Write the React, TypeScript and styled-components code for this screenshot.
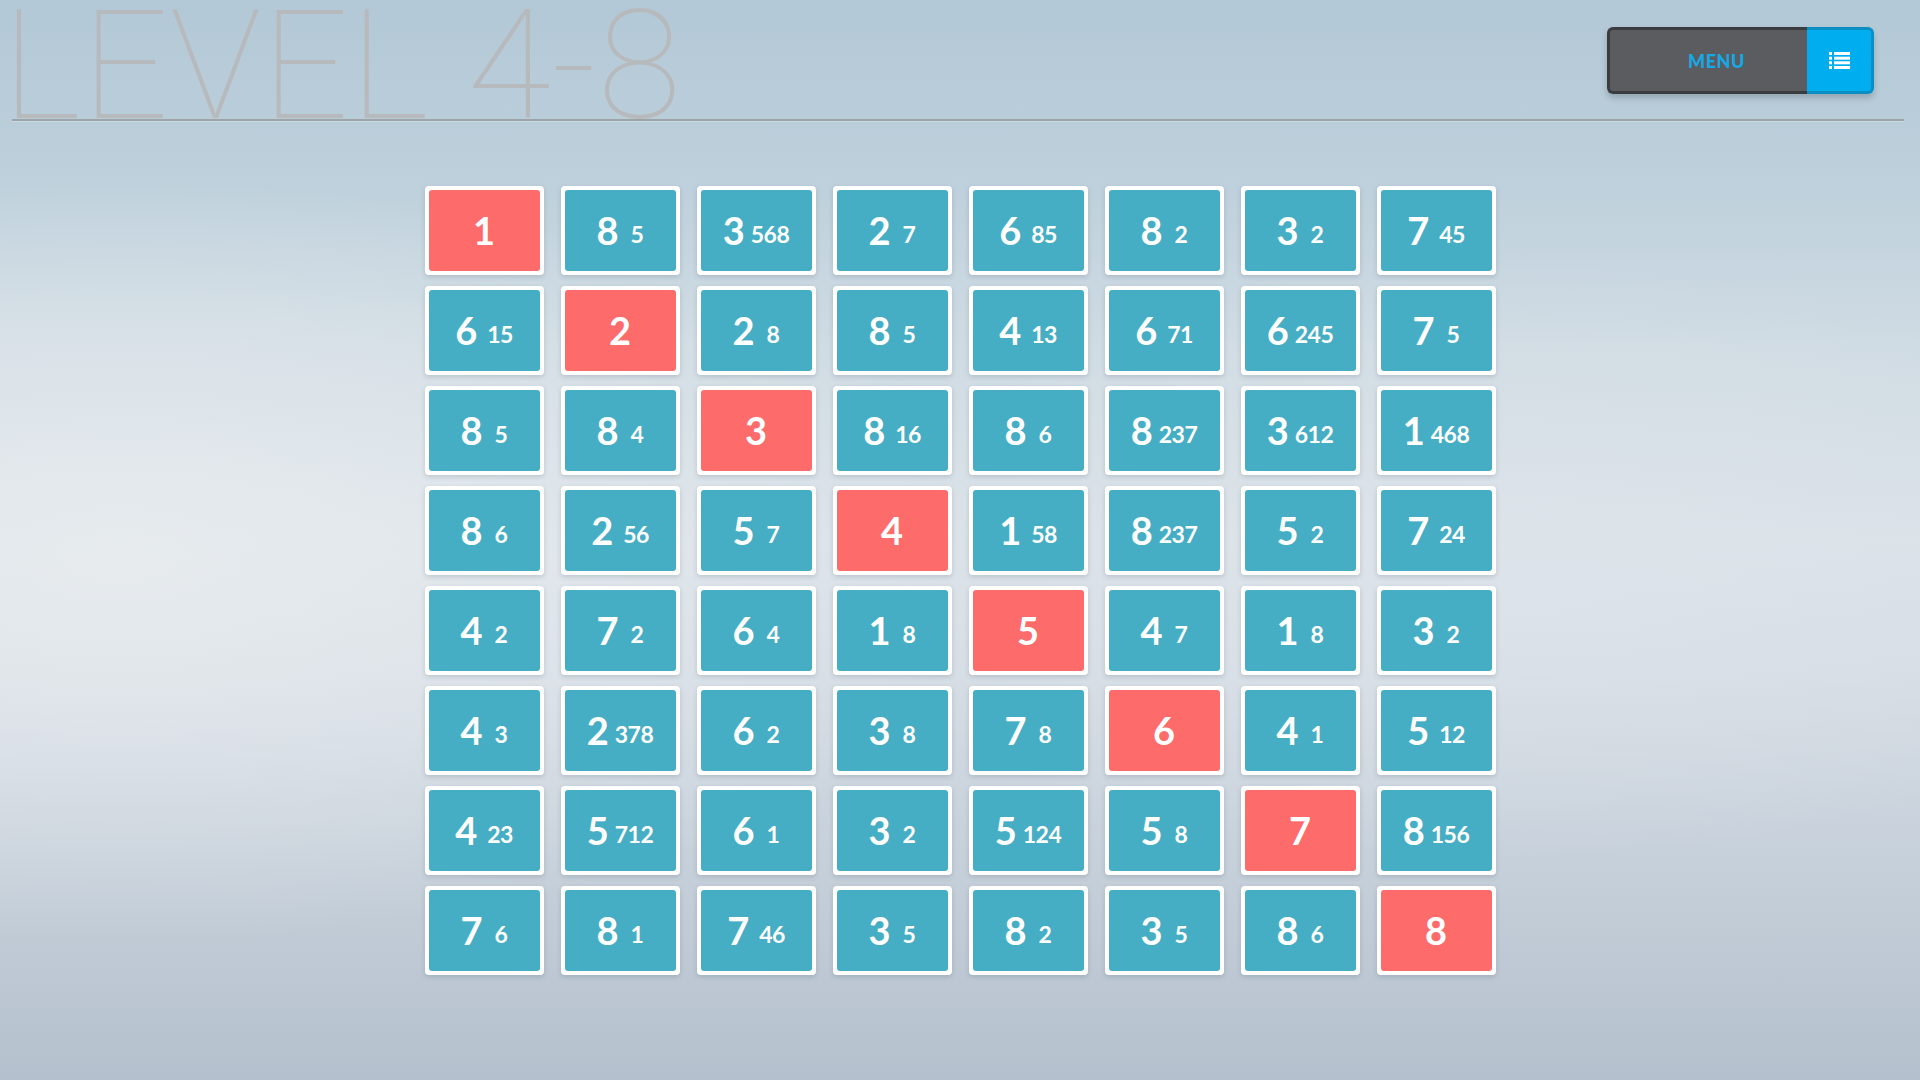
import styled, { createGlobalStyle } from "styled-components";

const Global = createGlobalStyle`
  html, body {
    margin: 0;
    padding: 0;
    height: 100%;
  }
  body {
    font-family: Lato, "Noto Sans", sans-serif;
    overflow: hidden;
  }
`

const Page = styled.div`
  width: 1920px;
  height: 1080px;
  background:
    radial-gradient(ellipse 900px 380px at 120px 560px, rgba(232,236,239,0.9), rgba(232,236,239,0) 100%),
    radial-gradient(ellipse 700px 300px at 1500px 560px, rgba(222,228,234,0.7), rgba(222,228,234,0) 100%),
    linear-gradient(180deg, #b3c8d6 0%, #bccfdb 15%, #cfdbe3 32%, #dae2e8 50%, #d6dde5 62%, #c6d0da 80%, #b4c0cd 100%);
  display: flex;
  flex-direction: column;
`

const Header = styled.header`
  margin: 0 16px 0 12px;
  height: 119px;
  border-bottom: 2px solid #9ea3a7;
  display: flex;
  justify-content: space-between;
  align-items: flex-start;
  box-shadow: 0 1px 0 rgba(255,255,255,0.25);
`

const Title = styled.h1`
  margin: 0 0 0 -10px;
  font-family: Roboto, "Liberation Sans", sans-serif;
  font-weight: 100;
  font-size: 153px;
  line-height: 0.86;
  color: #b7babd;
  letter-spacing: 0.8px;
  white-space: nowrap;
`

const Menu = styled.button`
  margin: 27px 30px 0 0;
  display: flex;
  height: 67px;
  padding: 0;
  border: none;
  background: none;
  border-radius: 6px;
  box-shadow: 0 4px 6px rgba(40,50,60,0.25);
  cursor: pointer;
`

const MenuLabel = styled.span`
  width: 200px;
  box-sizing: border-box;
  background: #5b5c60;
  border: 3px solid #3b3c3f;
  border-right: none;
  border-radius: 6px 0 0 6px;
  display: flex;
  align-items: center;
  justify-content: center;
  padding-left: 16px;
  font-family: Lato, "Noto Sans", sans-serif;
  font-weight: 900;
  font-size: 18px;
  letter-spacing: 0.5px;
  color: #17a8e4;
`

const MenuIcon = styled.span`
  width: 67px;
  box-sizing: border-box;
  background: #00aeef;
  border: 3px solid #0a8fc2;
  border-left: none;
  border-radius: 0 6px 6px 0;
  display: flex;
  align-items: center;
  justify-content: center;
`

const Board = styled.main`
  margin: 65px auto 0;
  display: grid;
  grid-template-columns: repeat(8, 119px);
  grid-auto-rows: 89px;
  column-gap: 17px;
  row-gap: 11px;
`

const Tile = styled.div<{ $hit?: boolean }>`
  background: #fff;
  padding: 4px;
  border-radius: 4px;
  box-shadow: 0 2px 5px rgba(60,80,100,0.2);
  box-sizing: border-box;
  div {
    height: 100%;
    border-radius: 3px;
    background: ${p => (p.$hit ? "#fe6b6b" : "#45aec4")};
    text-align: center;
    line-height: 81px;
    white-space: nowrap;
    overflow: hidden;
    color: #fff;
    font-family: Lato, "Noto Sans", sans-serif;
    font-weight: 700;
    font-size: 0;
  }
`

const Big = styled.span`
  font-size: 38px;
`

const Small = styled.span<{ $len: number }>`
  font-size: 23px;
  vertical-align: 2px;
  margin-left: ${p => (p.$len === 1 ? 12 : p.$len === 2 ? 10 : 6)}px;
  letter-spacing: -0.5px;
`

const rows: string[][] = [
  ["1", "8 5", "3 568", "2 7", "6 85", "8 2", "3 2", "7 45"],
  ["6 15", "2", "2 8", "8 5", "4 13", "6 71", "6 245", "7 5"],
  ["8 5", "8 4", "3", "8 16", "8 6", "8 237", "3 612", "1 468"],
  ["8 6", "2 56", "5 7", "4", "1 58", "8 237", "5 2", "7 24"],
  ["4 2", "7 2", "6 4", "1 8", "5", "4 7", "1 8", "3 2"],
  ["4 3", "2 378", "6 2", "3 8", "7 8", "6", "4 1", "5 12"],
  ["4 23", "5 712", "6 1", "3 2", "5 124", "5 8", "7", "8 156"],
  ["7 6", "8 1", "7 46", "3 5", "8 2", "3 5", "8 6", "8"],
];

function ListIcon() {
  return (
    <svg width="21" height="17" viewBox="0 0 21 17" fill="#fff">
      <rect x="0" y="0" width="3" height="3" />
      <rect x="5" y="0" width="16" height="3" />
      <rect x="0" y="4.7" width="3" height="3" />
      <rect x="5" y="4.7" width="16" height="3" />
      <rect x="0" y="9.3" width="3" height="3" />
      <rect x="5" y="9.3" width="16" height="3" />
      <rect x="0" y="14" width="3" height="3" />
      <rect x="5" y="14" width="16" height="3" />
    </svg>
  );
}

function App() {
  return (
    <Page>
      <Global />
      <Header>
        <Title>LEVEL 4-8</Title>
        <Menu>
          <MenuLabel>MENU</MenuLabel>
          <MenuIcon><ListIcon /></MenuIcon>
        </Menu>
      </Header>
      <Board>
        {rows.flatMap((row, r) =>
          row.map((cell, c) => {
            const [big, small] = cell.split(" ");
            return (
              <Tile key={`${r}-${c}`} $hit={!small}>
                <div>
                  <Big>{big}</Big>
                  {small && <Small $len={small.length}>{small}</Small>}
                </div>
              </Tile>
            );
          })
        )}
      </Board>
    </Page>
  );
}
export default App;
